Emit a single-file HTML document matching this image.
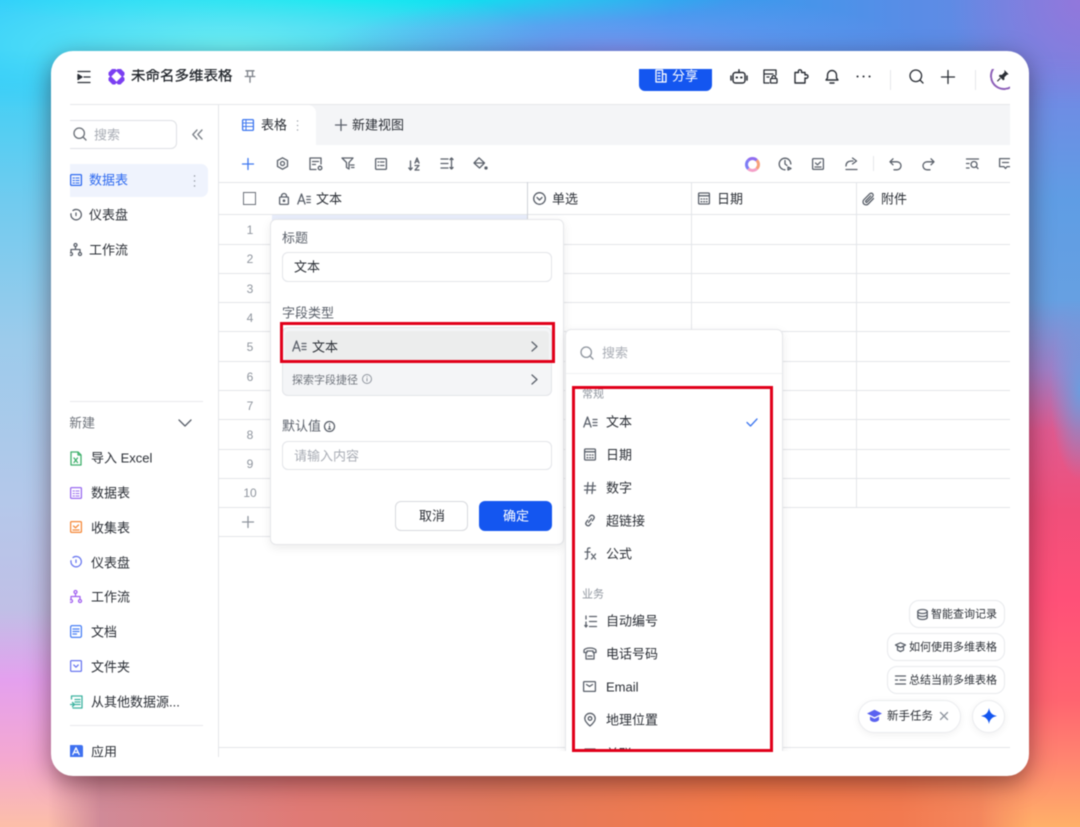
<!DOCTYPE html>
<html lang="zh"><head><meta charset="utf-8">
<style>
html,body{margin:0;padding:0;width:1080px;height:827px;overflow:hidden}
body{position:relative;font-family:"Liberation Sans","Noto Sans CJK SC",sans-serif;font-size:13px;color:#1f2329;
background:
radial-gradient(ellipse 130px 140px at 1080px 0,#9277dc 0%,rgba(146,119,220,0) 100%),
radial-gradient(ellipse 300px 60px at 620px 52px,#7a91ef 0%,rgba(122,145,239,0) 100%),
radial-gradient(ellipse 320px 70px at 230px 45px,#69eef2 0%,rgba(105,238,242,0) 100%),
radial-gradient(ellipse 380px 30px at 350px 0,#00e8f0 0%,rgba(0,232,240,0) 100%),
linear-gradient(90deg,#35cdfb 0%,#35cdfb 12%,#38c0f0 45%,#2f9ff0 62%,#5a8ce6 85%,#6f88e0 100%);
}
#sl{position:absolute;left:0;top:0;width:110px;height:827px;
background:linear-gradient(180deg,#2fd2fb 0,#40d0f5 80px,#70cbef 200px,#9ccbeb 340px,#b4c8ea 500px,#c0bfe6 610px,#e4a0ee 680px,#f4a8d0 760px,#fcbfa8 827px);
-webkit-mask-image:linear-gradient(180deg,transparent 51px,#000 110px);mask-image:linear-gradient(180deg,transparent 51px,#000 110px)}
#sr{position:absolute;left:970px;top:0;width:110px;height:827px;
background:
radial-gradient(ellipse 30px 90px at 110px 390px,rgba(102,160,226,.9) 0%,rgba(102,160,226,0) 100%),
linear-gradient(180deg,#9277dc 0,#6f8ce4 100px,#5f9de4 200px,#66a0e2 300px,#a080c8 370px,#e05a90 430px,#f04f7a 510px,#ff5078 600px,#ff6470 700px,#ff8570 760px,#ffb068 827px);
-webkit-mask-image:linear-gradient(180deg,transparent 51px,#000 110px);mask-image:linear-gradient(180deg,transparent 51px,#000 110px)}
#sb{position:absolute;left:0;top:765px;width:1080px;height:62px;
background:linear-gradient(90deg,#d08a98 0,#d08a98 100px,#e07a75 300px,#e27a5e 500px,#f57a48 750px,#f27a50 900px,#f58a60 1000px,#f59060 1080px);
-webkit-mask-image:linear-gradient(90deg,transparent 48px,#000 100px,#000 980px,transparent 1032px);mask-image:linear-gradient(90deg,transparent 48px,#000 100px,#000 980px,transparent 1032px)}
#sh{position:absolute;left:51px;top:51px;width:978px;height:725px;border-radius:22px;background:#fff;box-shadow:0 7px 24px rgba(50,10,20,.5)}
#page{position:absolute;left:0;top:0;width:1080px;height:827px;filter:blur(.45px)}
#w{position:absolute;left:70px;top:69px;width:940px;height:688px;overflow:hidden;background:#fff}
#o{position:absolute;left:-70px;top:-69px;width:1080px;height:827px}
.t{position:absolute;white-space:nowrap;line-height:18px;color:#2b2f36;transform:translateY(.6px)}
.a{position:absolute}
svg.i{position:absolute;fill:none;stroke:#5b616b;stroke-width:1.3;stroke-linecap:round;stroke-linejoin:round;overflow:visible}
.hl{position:absolute;background:#e3e5e9;height:1px}
.vl{position:absolute;background:#e3e5e9;width:1px}
.num{position:absolute;width:60px;left:220px;text-align:center;color:#8f959e;font-size:12px;line-height:16px;transform:translateY(.8px)}
.sm{font-size:11px}
.b{stroke:#2b2f36!important}
</style></head><body>
<div id="sl"></div><div id="sr"></div><div id="sb"></div>
<div id="page">
<div id="sh"></div>
<div id="w"><div id="o">

<!-- top bar -->
<svg class="i b" style="left:77px;top:70px" width="14" height="14" viewBox="0 0 14 14"><path d="M1 1.500h12M7 7h6M1 12.500h12"/><path d="M1 4.500l4 2.500-4 2.500z" fill="#2b2f36"/></svg>
<svg class="a" style="left:108px;top:68px" width="17" height="17" viewBox="0 0 17 17"><path d="M4.500 .5h2.500l1.500 1.500L10 .5h2.500l4 4V7L15 8.500 16.500 10v2.500l-4 4H10L8.500 15 7 16.500H4.500l-4-4V10L2 8.500.5 7V4.500z" fill="#7b3ff2"/><path d="M8.500 3.300l5.200 5.200-5.200 5.200-5.200-5.200z" fill="#fff"/></svg>
<div class="t" style="left:131px;top:67px;font-size:14.500px;color:#1f2329;-webkit-text-stroke:.25px #1f2329">未命名多维表格</div>
<svg class="i" style="left:244px;top:70px;stroke:#7b8088" width="12" height="13" viewBox="0 0 12 13"><path d="M2 .8h8M3.500.8v5M8.500.8v5M1.200 6.500h9.600M6 6.500v5.700"/></svg>

<div class="a" style="left:639px;top:50px;width:73px;height:41px;background:#1456f0;border-radius:6px"></div>
<svg class="i" style="left:655px;top:69px;stroke:#fff" width="12" height="14" viewBox="0 0 12 14"><path d="M1 1h6.500v12H1zM7.500 5H11v8H7.500M3 4h2M3 7h2M3 10h2"/></svg>
<div class="t" style="left:672px;top:67px;color:#fff;font-size:13px">分享</div>

<svg class="i b" style="left:730px;top:69px" width="18" height="15" viewBox="0 0 18 15"><rect x="3" y="3.500" width="12" height="10.500" rx="2.500" stroke-width="1.500"/><path d="M9 .8v2.700M1 7v4M17 7v4" stroke-width="1.500"/><path d="M6.500 8.500h.6M11 8.500h.6" stroke-width="1.900"/></svg>
<svg class="i b" style="left:763px;top:69px" width="15" height="15" viewBox="0 0 15 15"><path d="M6 14H1V1h12v5M1 5h9M4 8h2"/><rect x="7.500" y="9.500" width="6.500" height="4.500" rx=".8"/><path d="M9 9.500V8a1.800 1.800 0 013.500 0v1.500"/></svg>
<svg class="i b" style="left:794px;top:69px" width="15" height="15" viewBox="0 0 15 15"><path d="M1 3.500h3.500C4 1 5 .8 6 .8s2 .7 1.500 2.700H11V6c2-.7 3 .2 3 1.500S13 9.700 11 9v5H1z" stroke-width="1.400"/></svg>
<svg class="i b" style="left:825px;top:69px" width="14" height="15" viewBox="0 0 14 15"><path d="M1 11h12l-1.500-2V6a4.500 4.500 0 00-9 0v3zM5 14h4" stroke-width="1.400"/></svg>
<svg class="i b" style="left:856px;top:75px" width="15" height="3" viewBox="0 0 15 3"><path d="M1.500 1.500h.1M7.500 1.500h.1M13.500 1.500h.1" stroke-width="2"/></svg>
<div class="vl" style="left:890px;top:70px;height:20px;background:#e6e7ea"></div>
<svg class="i b" style="left:909px;top:69px" width="15" height="15" viewBox="0 0 15 15"><circle cx="6.800" cy="6.800" r="5.800" stroke-width="1.300"/><path d="M11 11l3 3" stroke-width="1.300"/></svg>
<svg class="i b" style="left:941px;top:70px" width="14" height="14" viewBox="0 0 14 14"><path d="M7 .5v13M.5 7h13" stroke-width="1.300"/></svg>
<div class="vl" style="left:975px;top:70px;height:20px;background:#e6e7ea"></div>
<div class="a" style="left:990px;top:62px;width:28px;height:28px;border-radius:50%;border:2px solid #8d5fb8;border-top-color:transparent;border-right-color:transparent;box-sizing:border-box;transform:rotate(-8deg)"></div>
<svg class="a" style="left:996px;top:69px" width="14" height="14" viewBox="0 0 16 16"><path d="M9.500 1l5 5-2 .5-3 3 .2 2.500-1.500 1-5-5 1-1.500 2.500.2 3-3z" fill="#2b2f36"/><path d="M5 10.500L1.500 14" stroke="#2b2f36" stroke-width="1.300"/></svg>

<div class="hl" style="left:70px;top:104px;width:940px;height:1px;background:#e6e7ea"></div>

<!-- sidebar -->
<div class="a" style="left:60px;top:120px;width:117px;height:29px;border:1px solid #dfe1e5;border-radius:6px;box-sizing:border-box"></div>
<svg class="i" style="left:73px;top:127px;stroke:#6b7078" width="14" height="14" viewBox="0 0 14 14"><circle cx="6.200" cy="6.200" r="5.200"/><path d="M10 10l3 3"/></svg>
<div class="t" style="left:94px;top:126px;color:#a9adb5">搜索</div>
<svg class="i" style="left:192px;top:129px;stroke:#7b8088" width="11" height="11" viewBox="0 0 11 11"><path d="M5 1L.8 5.500 5 10M10 1L5.800 5.500 10 10"/></svg>

<div class="a" style="left:60px;top:164px;width:148px;height:33px;background:#eff3fd;border-radius:7px"></div>
<svg class="i" style="left:70px;top:174px;stroke:#2f6bf0" width="12" height="12" viewBox="0 0 12 12"><rect x=".6" y=".6" width="10.800" height="10.800" rx="1"/><path d="M3 4h1.500M6 4h3M3 6.500h1.500M6 6.500h3M3 9h1.500M6 9h3" stroke-width="1"/></svg>
<div class="t" style="left:89px;top:171px;color:#2f6bf0">数据表</div>
<svg class="i" style="left:193px;top:175px;stroke:#8f959e" width="3" height="12" viewBox="0 0 3 12"><path d="M1.500 1h.1M1.500 6h.1M1.500 11h.1" stroke-width="1.400"/></svg>

<svg class="i" style="left:70px;top:209px" width="12" height="12" viewBox="0 0 12 12"><path d="M3 1.500a5.200 5.200 0 11-2 3.300M6 4v2.500"/></svg>
<div class="t" style="left:89px;top:206px">仪表盘</div>
<svg class="i" style="left:69px;top:243px" width="13" height="13" viewBox="0 0 13 13"><circle cx="6.500" cy="2" r="1.500"/><circle cx="2" cy="11" r="1.500"/><circle cx="11" cy="11" r="1.500"/><path d="M6.500 3.500v3M2 9.500V6.500h9v3"/></svg>
<div class="t" style="left:89px;top:241px">工作流</div>

<div class="a" style="left:69px;top:401px;width:134px;height:1px;background:#e8e9ec"></div>
<div class="t" style="left:69px;top:414px;color:#6e737b">新建</div>
<svg class="i" style="left:178px;top:419px" width="14" height="8" viewBox="0 0 14 8"><path d="M1 1l6 6 6-6"/></svg>

<svg class="i" style="left:70px;top:451px;stroke:#3fb06c" width="12" height="15" viewBox="0 0 12 15"><path d="M1 1h7l3 3v10H1zM8 1v3h3"/><path d="M4 7l3.500 4.500M7.500 7L4 11.500"/></svg>
<div class="t" style="left:91px;top:449px">导入 Excel</div>
<svg class="i" style="left:70px;top:487px;stroke:#9a6bf0" width="12" height="12" viewBox="0 0 12 12"><rect x=".6" y=".6" width="10.800" height="10.800" rx="1"/><path d="M3 4h1.500M6 4h3M3 6.500h1.500M6 6.500h3M3 9h1.500M6 9h3" stroke-width="1"/></svg>
<div class="t" style="left:91px;top:484px">数据表</div>
<svg class="i" style="left:70px;top:521px;stroke:#f5893a" width="12" height="12" viewBox="0 0 12 12"><rect x=".6" y=".6" width="10.800" height="10.800" rx="1"/><path d="M3.500 5l2 1.800L8.500 4M3 9h6"/></svg>
<div class="t" style="left:91px;top:519px">收集表</div>
<svg class="i" style="left:70px;top:556px;stroke:#6a78f0" width="12" height="12" viewBox="0 0 12 12"><path d="M3 1.500a5.200 5.200 0 11-2 3.300M6 4v2.500"/></svg>
<div class="t" style="left:91px;top:554px">仪表盘</div>
<svg class="i" style="left:69px;top:590px;stroke:#a262f0" width="13" height="13" viewBox="0 0 13 13"><circle cx="6.500" cy="2" r="1.500"/><circle cx="2" cy="11" r="1.500"/><circle cx="11" cy="11" r="1.500"/><path d="M6.500 3.500v3M2 9.500V6.500h9v3"/></svg>
<div class="t" style="left:91px;top:588px">工作流</div>
<svg class="i" style="left:70px;top:625px;stroke:#4a80f5" width="12" height="13" viewBox="0 0 12 13"><rect x=".6" y=".6" width="10.800" height="11.800" rx="1.500"/><path d="M3 4h6M3 6.500h6M3 9h3.500"/></svg>
<div class="t" style="left:91px;top:623px">文档</div>
<svg class="i" style="left:70px;top:660px;stroke:#6a78f0" width="12" height="12" viewBox="0 0 12 12"><rect x=".6" y=".6" width="10.800" height="10.800" rx="1"/><path d="M3.800 5L6 7.200 8.200 5"/></svg>
<div class="t" style="left:91px;top:658px">文件夹</div>
<svg class="i" style="left:69px;top:695px;stroke:#3cb3a0" width="14" height="14" viewBox="0 0 14 14"><path d="M2.500 4V1h10.500v12H4M6 4.500h5M6 7h5M6 9.500h5M.8 9.500h4M3.500 7.500l2 2-2 2"/></svg>
<div class="t" style="left:91px;top:693px">从其他数据源...</div>
<div class="a" style="left:69px;top:725px;width:134px;height:1px;background:#e8e9ec"></div>
<div class="a" style="left:69px;top:745px;width:14px;height:13px;background:#3f71f0;border-radius:2px"></div>
<svg class="i" style="left:72px;top:747px;stroke:#fff" width="8" height="9" viewBox="0 0 8 9"><path d="M4 .8L.8 7.500M4 .8l3.200 6.700M2 5.500h4"/></svg>
<div class="t" style="left:91px;top:743px">应用</div>

<div class="vl" style="left:218px;top:105px;height:652px;background:#e3e5e9"></div>

<!-- tabs -->
<div class="a" style="left:219px;top:105px;width:791px;height:40px;background:#f4f5f7"></div>
<div class="a" style="left:219px;top:105px;width:97px;height:41px;background:#fff;border-radius:0 8px 0 0"></div>
<svg class="i" style="left:242px;top:119px;stroke:#3f78f0" width="12" height="12" viewBox="0 0 12 12"><rect x=".6" y=".6" width="10.800" height="10.800" rx="1"/><path d="M.6 4h10.800M.6 7.500h10.800M4 .6v10.800" stroke-width="1"/></svg>
<div class="t" style="left:261px;top:116px">表格</div>
<svg class="i" style="left:296px;top:120px;stroke:#8f959e" width="3" height="11" viewBox="0 0 3 11"><path d="M1.500 1h.1M1.500 5.500h.1M1.500 10h.1" stroke-width="1.300"/></svg>
<svg class="i" style="left:335px;top:119px" width="12" height="12" viewBox="0 0 12 12"><path d="M6 .5v11M.5 6h11"/></svg>
<div class="t" style="left:352px;top:116px">新建视图</div>

<!-- toolbar -->
<svg class="i" style="left:242px;top:158px;stroke:#3f78f0" width="12" height="12" viewBox="0 0 12 12"><path d="M6 .5v11M.5 6h11" stroke-width="1.300"/></svg>
<svg class="i" style="left:276px;top:157px" width="13" height="13" viewBox="0 0 13 13"><path d="M6.500.8l5 2.800v5.800l-5 2.800-5-2.800V3.600z"/><circle cx="6.500" cy="6.500" r="2"/></svg>
<svg class="i" style="left:309px;top:157px" width="14" height="14" viewBox="0 0 14 14"><path d="M7 12.500H1V1h11v6M3.500 4.500h6M3.500 7.500h3"/><circle cx="11" cy="11" r="1.800"/></svg>
<svg class="i" style="left:341px;top:157px" width="14" height="13" viewBox="0 0 14 13"><path d="M1 1h11L8 5.500V12L5.500 10.500v-5zM9.500 8H13M10.500 10.500H13"/></svg>
<svg class="i" style="left:375px;top:158px" width="12" height="12" viewBox="0 0 12 12"><rect x=".6" y=".6" width="10.800" height="10.800" rx="1"/><path d="M3 4h.8M5.500 4h3.500M3 7.500h.8M5.500 7.500h3.500"/></svg>
<svg class="i" style="left:408px;top:157px" width="13" height="14" viewBox="0 0 13 14"><path d="M2.500 4v9M.8 11l1.700 2 1.700-2M7 6l2-5 2 5M7.800 4.500h2.400M7 8.500h4L7 13h4"/></svg>
<svg class="i" style="left:440px;top:157px" width="14" height="13" viewBox="0 0 14 13"><path d="M1 2h7M1 6.500h7M1 11h7M11.500 1v11M10 2.500L11.500 1 13 2.500M10 10.500l1.500 1.500 1.500-1.500"/></svg>
<svg class="i" style="left:473px;top:157px" width="14" height="13" viewBox="0 0 14 13"><path d="M6 .8l5.500 5.200-5 5-5.500-5zM1 6h10.500"/><circle cx="13" cy="11" r="1" fill="#5b616b"/></svg>

<div class="a" style="left:745px;top:157px;width:15px;height:15px;border-radius:50%;box-sizing:border-box;border:3px solid;border-color:#8f6cf0 #f7a07a #f4a0c8 #7d7cf5"></div>
<svg class="i" style="left:778px;top:157px" width="14" height="14" viewBox="0 0 14 14"><path d="M7 12.800A5.800 5.800 0 1112.800 7M7 3.500V7l2 1.500"/><path d="M10 10l3 1.500-3 1.500z"/></svg>
<svg class="i" style="left:812px;top:158px" width="12" height="12" viewBox="0 0 12 12"><rect x=".6" y=".6" width="10.800" height="10.800" rx="1"/><path d="M3.500 5l2 1.800L8.500 4M3 9h6"/></svg>
<svg class="i" style="left:845px;top:157px" width="13" height="13" viewBox="0 0 13 13"><path d="M1 9c0-4 3-5 6-5h1M7.500 1l4 3-4 3M1 12.500h11"/></svg>
<div class="vl" style="left:873px;top:156px;height:15px;background:#e6e7ea"></div>
<svg class="i" style="left:889px;top:158px" width="13" height="13" viewBox="0 0 13 13"><path d="M4 .8L1 3.800 4 6.800M1 3.800h7a4 4 0 010 8H5"/></svg>
<svg class="i" style="left:922px;top:158px" width="13" height="13" viewBox="0 0 13 13"><path d="M9 .8l3 3-3 3M12 3.800H5a4 4 0 000 8h3"/></svg>
<svg class="i" style="left:966px;top:158px" width="13" height="12" viewBox="0 0 13 12"><path d="M.5 1h12M.5 5.500h2.500M.5 10h2.500"/><circle cx="8" cy="6.500" r="3"/><path d="M10.200 8.700L12 10.500"/></svg>
<svg class="i" style="left:999px;top:158px" width="13" height="12" viewBox="0 0 13 12"><path d="M.6.600h11.800v8H8L6.500 10.500 5 8.600H.6zM3.500 4.500h6"/></svg>

<!-- grid -->
<div class="hl" style="left:219px;top:182px;width:791px"></div>
<div class="hl" style="left:219px;top:214px;width:791px"></div>
<div class="hl" style="left:219px;top:244px;width:791px"></div>
<div class="hl" style="left:219px;top:273px;width:791px"></div>
<div class="hl" style="left:219px;top:302px;width:791px"></div>
<div class="hl" style="left:219px;top:331px;width:791px"></div>
<div class="hl" style="left:219px;top:361px;width:791px"></div>
<div class="hl" style="left:219px;top:390px;width:791px"></div>
<div class="hl" style="left:219px;top:419px;width:791px"></div>
<div class="hl" style="left:219px;top:449px;width:791px"></div>
<div class="hl" style="left:219px;top:478px;width:791px"></div>
<div class="hl" style="left:219px;top:507px;width:791px"></div>
<div class="hl" style="left:219px;top:536px;width:320px"></div>
<div class="hl" style="left:219px;top:747px;width:791px"></div>
<div class="vl" style="left:527px;top:182px;height:325px;background:#cfd2d8"></div>
<div class="vl" style="left:691px;top:182px;height:325px"></div>
<div class="vl" style="left:856px;top:182px;height:325px"></div>
<div class="a" style="left:272px;top:215px;width:255px;height:6px;background:#e8edfb"></div>

<div class="a" style="left:243px;top:192px;width:13px;height:13px;border:1.300px solid #6e737b;box-sizing:border-box"></div>
<svg class="i" style="left:279px;top:193px" width="10" height="12" viewBox="0 0 10 12"><rect x=".6" y="4" width="8.800" height="7.400" rx="1"/><path d="M2.500 4V3a2.500 2.500 0 015 0v1"/><circle cx="5" cy="7.700" r=".7"/></svg>
<svg class="i" style="left:297px;top:193px" width="14" height="12" viewBox="0 0 14 12"><path d="M.8 11L4.500 1 8 11M2 8h5M9.800 3.500h3.500M9.800 6.500h3.500M9.800 9.500h3.500"/></svg>
<div class="t" style="left:316px;top:190px">文本</div>
<svg class="i" style="left:533px;top:192px" width="13" height="13" viewBox="0 0 13 13"><circle cx="6.500" cy="6.500" r="5.800"/><path d="M4 5.500l2.500 2.500L9 5.500"/></svg>
<div class="t" style="left:552px;top:190px">单选</div>
<svg class="i" style="left:698px;top:192px" width="12" height="13" viewBox="0 0 12 13"><rect x=".6" y="1" width="10.800" height="11" rx="1"/><path d="M.6 3.800h10.800M3 7h.8M5.700 7h.8M8.300 7h.8M3 9.700h.8M5.700 9.700h.8M8.300 9.700h.8"/></svg>
<div class="t" style="left:717px;top:190px">日期</div>
<svg class="i" style="left:862px;top:192px" width="13" height="14" viewBox="0 0 13 14"><path d="M11.500 6.500L6.200 12a3 3 0 01-4.300-4.300l5.800-5.900a2 2 0 012.900 2.800L5 10.200A.9.900 0 013.700 9l5-5.200"/></svg>
<div class="t" style="left:881px;top:190px">附件</div>

<div class="num" style="top:221px">1</div><div class="num" style="top:250px">2</div><div class="num" style="top:280px">3</div><div class="num" style="top:309px">4</div><div class="num" style="top:338px">5</div><div class="num" style="top:368px">6</div><div class="num" style="top:397px">7</div><div class="num" style="top:426px">8</div><div class="num" style="top:455px">9</div><div class="num" style="top:484px">10</div>
<svg class="i" style="left:242px;top:516px;stroke:#8f959e" width="12" height="12" viewBox="0 0 12 12"><path d="M6 .5v11M.5 6h11"/></svg>

<!-- right chips -->
<div class="a" style="left:909px;top:600px;width:96px;height:28px;border:1px solid #e8eaed;border-radius:10px;box-sizing:border-box;background:#fff"></div>
<svg class="i" style="left:917px;top:609px" width="11" height="11" viewBox="0 0 11 11"><ellipse cx="5.500" cy="2.500" rx="4.700" ry="2"/><path d="M.8 2.500v6c0 1.100 2.100 2 4.700 2s4.700-.9 4.700-2v-6M.8 5.500c0 1.100 2.100 2 4.700 2s4.700-.9 4.700-2"/></svg>
<div class="t sm" style="left:931px;top:605px">智能查询记录</div>
<div class="a" style="left:887px;top:633px;width:118px;height:28px;border:1px solid #e8eaed;border-radius:10px;box-sizing:border-box;background:#fff"></div>
<svg class="i" style="left:895px;top:642px" width="11" height="10" viewBox="0 0 11 10"><path d="M5.500.8L10.500 3l-5 2.500L.5 3zM2.500 4.500v3.500l3 1.500 3-1.500V4.500"/></svg>
<div class="t sm" style="left:909px;top:638px">如何使用多维表格</div>
<div class="a" style="left:887px;top:666px;width:118px;height:28px;border:1px solid #e8eaed;border-radius:10px;box-sizing:border-box;background:#fff"></div>
<svg class="i" style="left:895px;top:675px" width="11" height="10" viewBox="0 0 11 10"><path d="M.5 1h10M.5 5h2M5 5h5.500M.5 9h10"/></svg>
<div class="t sm" style="left:909px;top:671px">总结当前多维表格</div>
<div class="a" style="left:858px;top:700px;width:103px;height:33px;border:1px solid #ebecef;border-radius:17px;box-sizing:border-box;background:#fff;box-shadow:0 2px 8px rgba(0,0,0,.06)"></div>
<svg class="a" style="left:867px;top:709px" width="15" height="14" viewBox="0 0 15 14"><path d="M7.500.8L15 4.500 7.500 8.200 0 4.500z" fill="#5a62f0"/><path d="M3 7.500v3.500c1 1.300 2.800 2 4.500 2s3.500-.7 4.500-2V7.500L7.500 9.800z" fill="#5a62f0"/></svg>
<div class="t" style="left:887px;top:707px;font-size:11.500px">新手任务</div>
<svg class="i" style="left:940px;top:712px;stroke:#8f959e" width="8" height="8" viewBox="0 0 8 8"><path d="M.5.500l7 7M7.500.5l-7 7"/></svg>
<div class="a" style="left:972px;top:700px;width:33px;height:33px;border:1px solid #ebecef;border-radius:50%;box-sizing:border-box;background:#fff;box-shadow:0 2px 8px rgba(0,0,0,.06)"></div>
<svg class="a" style="left:980px;top:707px" width="18" height="18" viewBox="0 0 18 18"><path d="M9 1c.8 4.500 3 7 8 8-5 1-7.200 3.500-8 8-.8-4.500-3-7-8-8 5-1 7.200-3.500 8-8z" fill="#1456f0"/></svg>

<!-- popup 1 -->
<div class="a" style="left:270px;top:219px;width:294px;height:326px;background:#fff;border:1px solid #e6e7ea;border-radius:6px;box-sizing:border-box;box-shadow:0 3px 10px rgba(0,0,0,.08)"></div>
<div class="t" style="left:282px;top:229px;color:#5b616b">标题</div>
<div class="a" style="left:282px;top:252px;width:270px;height:30px;border:1px solid #e3e5e9;border-radius:6px;box-sizing:border-box"></div>
<div class="t" style="left:294px;top:258px">文本</div>
<div class="t" style="left:282px;top:304px;color:#5b616b">字段类型</div>
<div class="a" style="left:282px;top:327px;width:270px;height:69px;background:#f4f5f7;border:1px solid #e3e5e9;border-radius:6px;box-sizing:border-box"></div>
<div class="a" style="left:285px;top:331px;width:264px;height:31px;background:#eceded;border-radius:4px"></div>
<svg class="i" style="left:292px;top:340px" width="15" height="12" viewBox="0 0 15 12"><path d="M.8 11L4.500 1 8 11M2 8h5M10 3.500h4M10 6.500h4M10 9.500h4"/></svg>
<div class="t" style="left:312px;top:338px">文本</div>
<svg class="i" style="left:531px;top:341px" width="7" height="11" viewBox="0 0 7 11"><path d="M1 1l5 4.500-5 4.500"/></svg>
<div class="t sm" style="left:292px;top:371px;color:#6e737b">探索字段捷径</div>
<svg class="i" style="left:362px;top:374px;stroke:#8f959e;stroke-width:1" width="10" height="10" viewBox="0 0 10 10"><circle cx="5" cy="5" r="4.500"/><path d="M5 4.500v2.500M5 2.800h.1"/></svg>
<svg class="i" style="left:531px;top:374px" width="7" height="11" viewBox="0 0 7 11"><path d="M1 1l5 4.500-5 4.500"/></svg>
<div class="t" style="left:282px;top:417px;color:#5b616b">默认值</div>
<svg class="i" style="left:324px;top:421px" width="11" height="11" viewBox="0 0 11 11"><circle cx="5.500" cy="5.500" r="5"/><path d="M5.500 5v3M5.500 3h.1M4.500 8h2"/></svg>
<div class="a" style="left:282px;top:441px;width:270px;height:29px;border:1px solid #e3e5e9;border-radius:6px;box-sizing:border-box"></div>
<div class="t" style="left:294px;top:447px;color:#a9adb5">请输入内容</div>
<div class="a" style="left:395px;top:501px;width:73px;height:30px;border:1px solid #d8dade;border-radius:6px;box-sizing:border-box;background:#fff"></div>
<div class="t" style="left:419px;top:507px">取消</div>
<div class="a" style="left:479px;top:501px;width:73px;height:30px;background:#1456f0;border-radius:6px"></div>
<div class="t" style="left:503px;top:507px;color:#fff">确定</div>

<!-- popup 2 -->
<div class="a" style="left:565px;top:329px;width:218px;height:440px;background:#fff;border:1px solid #e6e7ea;border-radius:6px;box-sizing:border-box;box-shadow:0 3px 10px rgba(0,0,0,.08)"></div>
<svg class="i" style="left:580px;top:346px;stroke:#8f959e" width="14" height="14" viewBox="0 0 14 14"><circle cx="6.200" cy="6.200" r="5.200"/><path d="M10 10l3 3"/></svg>
<div class="t" style="left:602px;top:344px;color:#a9adb5">搜索</div>
<div class="a" style="left:566px;top:373px;width:216px;height:1px;background:#f0f1f3"></div>
<div class="t" style="left:582px;top:385px;color:#8f959e;font-size:11px">常规</div>
<svg class="i" style="left:583px;top:416px" width="15" height="12" viewBox="0 0 15 12"><path d="M.8 11L4.500 1 8 11M2 8h5M10 3.500h4M10 6.500h4M10 9.500h4"/></svg>
<div class="t" style="left:606px;top:413px">文本</div>
<svg class="i" style="left:746px;top:418px;stroke:#3f78f0" width="12" height="9" viewBox="0 0 12 9"><path d="M1 4.500L4.500 8 11 1"/></svg>
<svg class="i" style="left:584px;top:448px" width="12" height="13" viewBox="0 0 12 13"><rect x=".6" y="1" width="10.800" height="11" rx="1"/><path d="M.6 3.800h10.800M3 7h.8M5.700 7h.8M8.300 7h.8M3 9.700h.8M5.700 9.700h.8M8.300 9.700h.8"/></svg>
<div class="t" style="left:606px;top:446px">日期</div>
<svg class="i" style="left:584px;top:482px" width="12" height="12" viewBox="0 0 12 12"><path d="M4 .5L3 11.500M9 .5L8 11.500M.5 4h11M.5 8h11"/></svg>
<div class="t" style="left:606px;top:479px">数字</div>
<svg class="i" style="left:584px;top:514px" width="12" height="13" viewBox="0 0 12 13"><path d="M5 3.500l1.500-1.800a2.300 2.300 0 013.300 3.100L8.200 6.800M7 9.500l-1.500 1.800a2.300 2.300 0 01-3.300-3.100l1.600-2M4.500 8.500L7.500 4.500"/></svg>
<div class="t" style="left:606px;top:512px">超链接</div>
<svg class="i" style="left:584px;top:547px" width="13" height="13" viewBox="0 0 13 13"><path d="M6 1H5C3.800 1 3.500 2 3.500 3v7c0 1-.5 2-2 2M1 5h5M7.500 7l4 5M11.500 7l-4 5"/></svg>
<div class="t" style="left:606px;top:545px">公式</div>
<div class="t" style="left:582px;top:585px;color:#8f959e;font-size:11px">业务</div>
<svg class="i" style="left:584px;top:615px" width="13" height="13" viewBox="0 0 13 13"><path d="M5.500 1.500h7M5.500 6.500h7M5.500 11.500h7M2 1v3M2 7v5M.8 10.500L2 12l1.200-1.500"/></svg>
<div class="t" style="left:606px;top:612px">自动编号</div>
<svg class="i" style="left:583px;top:647px" width="14" height="13" viewBox="0 0 14 13"><path d="M1 5.500V3.500C1 2 4 1 7 1s6 1 6 2.500v2h-3V4H4v1.500zM3 5.500v6.500h8V5.500M5 9h4"/></svg>
<div class="t" style="left:606px;top:645px">电话号码</div>
<svg class="i" style="left:583px;top:681px" width="13" height="11" viewBox="0 0 13 11"><rect x=".6" y=".6" width="11.800" height="9.800" rx=".8"/><path d="M3.500 3.500l3 2 3-2"/></svg>
<div class="t" style="left:606px;top:678px;font-size:13px">Email</div>
<svg class="i" style="left:584px;top:713px" width="12" height="14" viewBox="0 0 12 14"><path d="M6 13C3 10.500.8 8.200.8 5.500a5.200 5.200 0 0110.400 0C11.200 8.200 9 10.500 6 13z"/><circle cx="6" cy="5.500" r="1.800"/></svg>
<div class="t" style="left:606px;top:711px">地理位置</div>
<div class="t" style="left:606px;top:745px">关联</div>
<svg class="i" style="left:584px;top:748px" width="12" height="12" viewBox="0 0 12 12"><path d="M1 1h10M6 1v10"/></svg>

<!-- white clip below red box -->
<div class="a" style="left:555px;top:751px;width:240px;height:10px;background:#fff"></div>
<!-- red boxes -->
<div class="a" style="left:280px;top:322px;width:275px;height:41px;border:3px solid #e1001a;box-sizing:border-box"></div>
<div class="a" style="left:572px;top:386px;width:201px;height:366px;border:3px solid #e1001a;box-sizing:border-box"></div>

</div></div>
</div>
</body></html>
